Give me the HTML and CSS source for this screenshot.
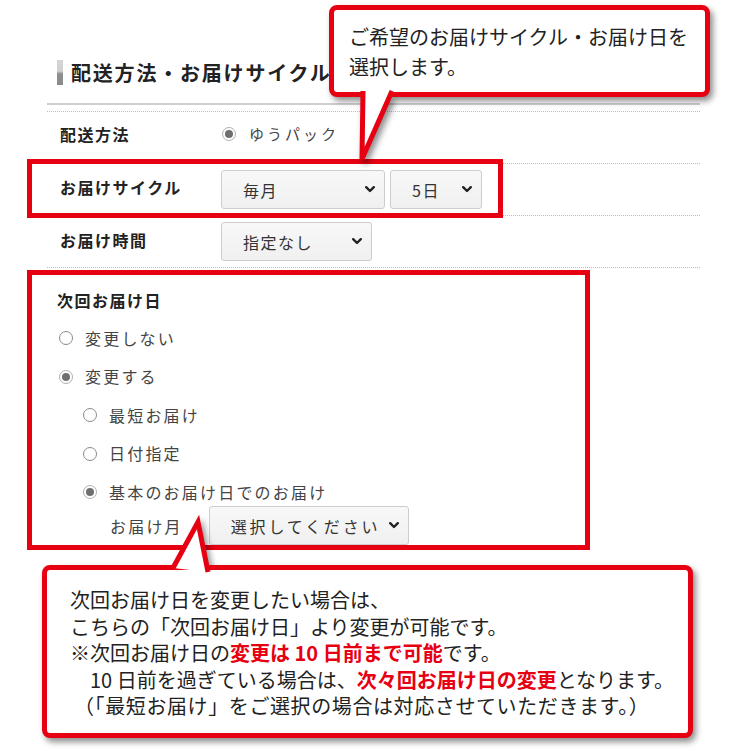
FILE: index.html
```html
<!DOCTYPE html>
<html lang="ja">
<head>
<meta charset="utf-8">
<link rel="stylesheet" href="styles.css">
</head>
<body>
<div class="page">
  <div class="heading"><span class="bar"></span><h2>配送方法・お届けサイクル等</h2></div>
  <div class="rule-solid"></div>
  <div class="rows">
    <div class="row row-1">
      <div class="label">配送方法</div>
      <div class="value"><span class="radio on"></span><span class="vtext">ゆうパック</span></div>
    </div>
    <div class="row row-2">
      <div class="label">お届けサイクル</div>
      <div class="value">
        <div class="sel w-month"><span>毎月</span><svg class="chev" viewBox="0 0 10 7"><path d="M1.2 1.2 L5 5 L8.8 1.2"/></svg></div>
        <div class="sel w-day"><span>5日</span><svg class="chev" viewBox="0 0 10 7"><path d="M1.2 1.2 L5 5 L8.8 1.2"/></svg></div>
      </div>
    </div>
    <div class="row row-3">
      <div class="label">お届け時間</div>
      <div class="value">
        <div class="sel w-time"><span>指定なし</span><svg class="chev" viewBox="0 0 10 7"><path d="M1.2 1.2 L5 5 L8.8 1.2"/></svg></div>
      </div>
    </div>
  </div>

  <div class="next">
    <div class="next-title">次回お届け日</div>
    <div class="opt"><span class="radio"></span><span class="otext">変更しない</span></div>
    <div class="opt"><span class="radio on"></span><span class="otext">変更する</span></div>
    <div class="opt sub"><span class="radio"></span><span class="otext">最短お届け</span></div>
    <div class="opt sub"><span class="radio"></span><span class="otext">日付指定</span></div>
    <div class="opt sub"><span class="radio on"></span><span class="otext">基本のお届け日でのお届け</span></div>
    <div class="month-row">
      <span class="otext month-label">お届け月</span>
      <div class="sel w-pick"><span>選択してください</span><svg class="chev" viewBox="0 0 10 7"><path d="M1.2 1.2 L5 5 L8.8 1.2"/></svg></div>
    </div>
  </div>

  <div class="hl hl-cycle"></div>
  <div class="hl hl-next"></div>

  <div class="callout callout-top">
    <div class="cbox cbox-top">ご希望のお届けサイクル・お届け日を<br>選択します。</div>
    <svg class="tail tail-top" viewBox="0 0 60 80" width="60" height="80">
      <polygon points="33,0 32,68 62,0" class="tail-fill"/>
      <polyline points="33,0 32,68 62,0" class="tail-line"/>
    </svg>
  </div>

  <div class="callout callout-bottom">
    <div class="cbox cbox-bottom">次回お届け日を変更したい場合は、<br>こちらの「次回お届け日」より変更が可能です。<br>※次回お届け日の<b>変更は 10 日前まで可能</b>です。<br><span class="ind">10 日前を過ぎている場合は、<b>次々回お届け日の変更</b>となります。</span><br><span class="ind2">（「最短お届け」をご選択の場合は対応させていただきます。）</span></div>
    <svg class="tail tail-bottom" viewBox="0 0 60 60" width="60" height="60">
      <polygon points="21,56 46,10 56,60" class="tail-fill"/>
      <polyline points="21,56 46,10 56,60" class="tail-line"/>
    </svg>
  </div>
</div>
</body>
</html>
```

FILE: styles.css
```css
html, body {
  margin: 0;
  padding: 0;
  background: #fff;
}
body {
  font-family: "Noto Sans CJK JP", "Noto Sans", sans-serif;
  color: #333;
}
.page {
  position: relative;
  width: 740px;
  height: 751px;
  box-sizing: border-box;
  padding: 60px 40px 0 47px;
  overflow: hidden;
}
.heading {
  display: flex;
  align-items: center;
  height: 25px;
  margin-left: 10px;
}
.bar {
  width: 6px;
  height: 25px;
  background: linear-gradient(#d6d6d6 0%, #d0d0d0 45%, #8f8f8f 55%, #8a8a8a 100%);
}
.heading h2 {
  margin: 0 0 0 8px;
  font-size: 20px;
  line-height: 25px;
  font-weight: 700;
  letter-spacing: 1.8px;
  color: #222;
  white-space: nowrap;
}
.rule-solid {
  margin-top: 18px;
  height: 2px;
  background: #cfcfcf;
}
.rows {
  margin-top: 6px;
  border-top: 1px dotted #bdbdbd;
}
.row {
  display: flex;
  align-items: center;
  height: 51px;
  box-sizing: content-box;
  border-bottom: 1px dotted #bdbdbd;
}
.row-1 .label,
.row-1 .value {
  margin-bottom: 8px;
}
.row-2 .label {
  margin-bottom: 6px;
}
.row-3 .label {
  margin-bottom: 4px;
}
.label {
  width: 174px;
  box-sizing: border-box;
  padding-left: 13px;
  font-size: 16px;
  font-weight: 700;
  letter-spacing: 1.5px;
  color: #222;
}
.value {
  display: flex;
  align-items: center;
}
.radio {
  position: relative;
  width: 14px;
  height: 14px;
  box-sizing: border-box;
  border: 1px solid #8a8a8a;
  border-radius: 50%;
  background: #fff;
  flex: none;
}
.radio.on {
  border-color: #b0b0b0;
}
.radio.on::after {
  content: "";
  position: absolute;
  left: 2px;
  top: 2px;
  width: 8px;
  height: 8px;
  border-radius: 50%;
  background: #6f6f6f;
}
.value .radio {
  margin-left: 1px;
}
.vtext {
  margin-left: 13px;
  font-size: 15px;
  letter-spacing: 3px;
  color: #444;
}
.sel {
  display: flex;
  align-items: center;
  height: 39px;
  box-sizing: border-box;
  border: 1px solid #cdcdcd;
  border-radius: 3px;
  background: linear-gradient(#f8f8f8, #f0f0f0);
  padding: 0 9px 0 21px;
  font-size: 16px;
  letter-spacing: 1.5px;
  color: #333;
}
.sel span {
  flex: 1;
  white-space: nowrap;
}
.chev {
  width: 10px;
  height: 7px;
  flex: none;
}
.chev path {
  fill: none;
  stroke: #222;
  stroke-width: 2.4;
  stroke-linecap: round;
  stroke-linejoin: round;
}
.w-month { width: 164px; }
.w-day { width: 92px; margin-left: 5px; }
.w-time { width: 151px; }
.w-pick { width: 200px; margin-left: 26px; padding-left: 21px; letter-spacing: 2.8px; }

.next {
  padding-left: 10px;
  padding-top: 13px;
}
.next-title {
  height: 38px;
  line-height: 38px;
  font-size: 16px;
  font-weight: 700;
  letter-spacing: 1.5px;
  color: #222;
}
.opt {
  display: flex;
  align-items: center;
  height: 38.5px;
  padding-left: 2px;
}
.opt .otext {
  margin-bottom: 1px;
}
.opt.sub {
  padding-left: 26px;
}
.otext {
  margin-left: 12px;
  font-size: 16px;
  letter-spacing: 2.2px;
  color: #444;
}
.month-row {
  display: flex;
  align-items: center;
  height: 38px;
  margin-top: -5px;
  padding-left: 40px;
}
.month-label {
  margin-left: 13px;
}

.hl {
  position: absolute;
  box-sizing: border-box;
  border: 5px solid #e60012;
}
.hl-cycle {
  left: 27px;
  top: 159px;
  width: 476px;
  height: 59px;
}
.hl-next {
  left: 27px;
  top: 270px;
  width: 563px;
  height: 280px;
}

.callout {
  position: absolute;
  filter: drop-shadow(3px 4px 3px rgba(0, 0, 0, 0.45));
}
.cbox {
  position: relative;
  box-sizing: border-box;
  border: 5px solid #e60012;
  border-radius: 8px;
  background: #fff;
  color: #222;
  font-size: 20px;
  white-space: nowrap;
}
.cbox b {
  color: #e60012;
  font-weight: 700;
}
.callout-top {
  left: 329px;
  top: 5px;
}
.cbox-top {
  width: 381px;
  height: 92px;
  padding: 12px 0 0 15px;
  line-height: 30px;
}
.callout-bottom {
  left: 42px;
  top: 565px;
}
.cbox-bottom {
  width: 651px;
  height: 173px;
  padding: 17px 0 0 23px;
  line-height: 26.5px;
}
.ind { margin-left: 20px; }
.ind2 { margin-left: 4px; letter-spacing: 0.6px; }
.tail {
  position: absolute;
  overflow: visible;
}
.tail-fill {
  fill: #fff;
  stroke: none;
}
.tail-line {
  fill: none;
  stroke: #e60012;
  stroke-width: 5;
  stroke-linejoin: miter;
}
.tail-top {
  left: 1px;
  top: 86px;
}
.tail-bottom {
  left: 110px;
  top: -53px;
}
```
